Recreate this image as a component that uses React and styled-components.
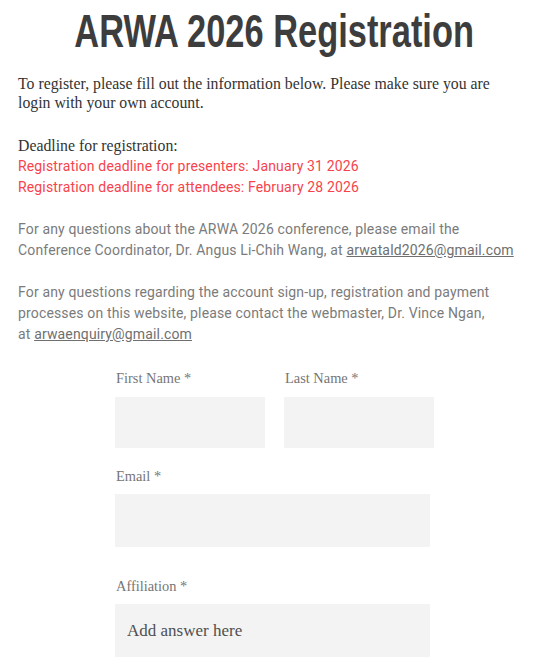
import React from "react";
import styled, { createGlobalStyle } from "styled-components";

const Global = createGlobalStyle`
  html, body { margin: 0; padding: 0; background: #fff; }
  body { font-family: "Liberation Serif", serif; }
`;

const Page = styled.div`
  padding: 0 8px 20px 18px;
`;

const TitleBar = styled.div`
  padding-top: 6px;
  display: flex;
  justify-content: center;
  height: 50px;
`;

const Title = styled.h1`
  margin: 0;
  display: inline-block;
  white-space: nowrap;
  font-family: "Liberation Sans", Arial, sans-serif;
  font-weight: 700;
  font-size: 46px;
  line-height: 50px;
  color: #3d3d3d;
  transform: scaleX(0.748);
  transform-origin: center;
`;

const Intro = styled.p`
  margin: 18px 0 0;
  font-family: "Liberation Serif", serif;
  font-size: 15.8px;
  line-height: 19px;
  color: #333;
`;

const Heading = styled.p`
  margin: 23px 0 0;
  font-family: "Liberation Serif", serif;
  font-size: 15.8px;
  line-height: 21px;
  color: #333;
`;

const Notice = styled.p`
  margin: 0;
  font-family: Roboto, "Liberation Sans", sans-serif;
  font-size: 14px;
  letter-spacing: 0.15px;
  line-height: 21px;
  color: ${(p) => (p.$alert ? "#f7434c" : "#7b7b7b")};
`;

const Spaced = styled.div`
  margin-top: 21px;
  display: flex;
  flex-direction: column;
  gap: 21px;
`;

const Mail = styled.a`
  color: #6f6f6f;
  text-decoration: underline;
`;

const Form = styled.form`
  width: 319px;
  margin: 24px auto 0;
  display: flex;
  flex-direction: column;
`;

const Row = styled.div`
  display: grid;
  grid-template-columns: 150px 150px;
  column-gap: 19px;
`;

const Field = styled.div`
  display: flex;
  flex-direction: column;
  margin-top: ${(p) => p.$top || 0}px;
`;

const Label = styled.label`
  font-family: "Liberation Serif", serif;
  font-size: 14.4px;
  line-height: 18px;
  color: #767676;
  padding-left: 1px;
  margin-bottom: ${(p) => p.$gap || 9}px;
`;

const Input = styled.input`
  box-sizing: border-box;
  width: ${(p) => p.$w || 150}px;
  height: ${(p) => p.$h || 51}px;
  border: none;
  outline: none;
  background: #f3f3f3;
  padding: 0 12px;
  font-family: "Liberation Serif", serif;
  font-size: 17px;
  color: #444;
  &::placeholder { color: #4f4f4f; }
`;

export default function App() {
  return (
    <>
      <Global />
      <Page>
        <TitleBar>
          <Title>ARWA 2026 Registration</Title>
        </TitleBar>
        <Intro>
          To register, please fill out the information below. Please make sure you are
          <br />
          login with your own account.
        </Intro>
        <Heading>Deadline for registration:</Heading>
        <Notice $alert>Registration deadline for presenters: January 31 2026</Notice>
        <Notice $alert>Registration deadline for attendees: February 28 2026</Notice>
        <Spaced>
          <Notice>
            For any questions about the ARWA 2026 conference, please email the
            <br />
            Conference Coordinator, Dr. Angus Li-Chih Wang, at <Mail href="#">arwatald2026@gmail.com</Mail>
          </Notice>
          <Notice>
            For any questions regarding the account sign-up, registration and payment
            <br />
            processes on this website, please contact the webmaster, Dr. Vince Ngan,
            <br />
            at <Mail href="#">arwaenquiry@gmail.com</Mail>
          </Notice>
        </Spaced>
        <Form onSubmit={(e) => e.preventDefault()}>
          <Row>
            <Field>
              <Label $gap={10}>First Name *</Label>
              <Input />
            </Field>
            <Field>
              <Label $gap={10}>Last Name *</Label>
              <Input />
            </Field>
          </Row>
          <Field $top={19}>
            <Label>Email *</Label>
            <Input $w={315} $h={53} />
          </Field>
          <Field $top={30}>
            <Label>Affiliation *</Label>
            <Input $w={315} $h={53} placeholder="Add answer here" />
          </Field>
        </Form>
      </Page>
    </>
  );
}
